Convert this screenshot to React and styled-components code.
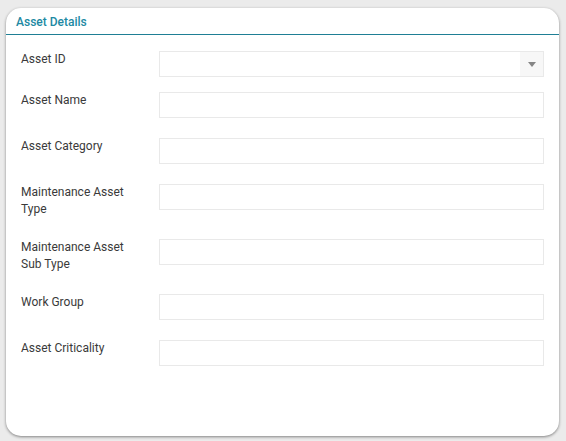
import React from 'react';
import styled, { createGlobalStyle } from 'styled-components';

const GlobalStyle = createGlobalStyle`
  html, body {
    margin: 0;
    padding: 0;
    background: #ebebeb;
    font-family: Roboto, "Liberation Sans", Arial, sans-serif;
  }
`;

const Page = styled.div`
  padding: 8px 7px 5px 6px;
`;

const Card = styled.section`
  height: 428px;
  box-sizing: border-box;
  background: #fff;
  border-radius: 15px;
  box-shadow: 0 1px 3px rgba(0, 0, 0, 0.45);
  overflow: hidden;
`;

const CardHeader = styled.header`
  height: 27px;
  box-sizing: border-box;
  padding: 7px 10px 0;
  border-bottom: 1px solid #1f7f95;
`;

const Title = styled.h2`
  margin: 0;
  font-size: 12px;
  font-weight: 500;
  line-height: 14px;
  color: #2189a3;
`;

const Form = styled.div`
  padding: 16px 15px 0;
  display: flex;
  flex-direction: column;
`;

const Row = styled.div`
  display: flex;
  align-items: flex-start;
  gap: 20px;
  margin-bottom: ${(props) => (props.$tight ? '15px' : '20px')};
`;

const Label = styled.label`
  width: 118px;
  flex-shrink: 0;
  font-size: 12px;
  line-height: 17.4px;
  color: #3a3a3a;
`;

const Input = styled.input`
  flex: 1;
  height: 26px;
  box-sizing: border-box;
  margin: 0;
  padding: 0 8px;
  border: 1px solid #e9e9e9;
  border-radius: 0;
  background: #fff;
  font: inherit;
  font-size: 12px;
  outline: none;
`;

const SelectBox = styled.div`
  flex: 1;
  height: 26px;
  box-sizing: border-box;
  display: flex;
  border: 1px solid #e9e9e9;
  background: #fff;
`;

const SelectValue = styled.div`
  flex: 1;
`;

const SelectButton = styled.div`
  width: 23px;
  display: flex;
  align-items: center;
  justify-content: center;
  background: #f7f7f7;
`;

const Caret = styled.span`
  width: 0;
  height: 0;
  border-left: 4.5px solid transparent;
  border-right: 4.5px solid transparent;
  border-top: 5px solid #858585;
  margin-top: 1px;
`;

const fields = [
  'Asset Name',
  'Asset Category',
  'Maintenance Asset Type',
  'Maintenance Asset Sub Type',
  'Work Group',
  'Asset Criticality',
];

const App = () => (
  <>
    <GlobalStyle />
    <Page>
      <Card>
        <CardHeader>
          <Title>Asset Details</Title>
        </CardHeader>
        <Form>
          <Row $tight>
            <Label>Asset ID</Label>
            <SelectBox>
              <SelectValue />
              <SelectButton>
                <Caret />
              </SelectButton>
            </SelectBox>
          </Row>
          {fields.map((name) => (
            <Row key={name}>
              <Label>{name}</Label>
              <Input type="text" />
            </Row>
          ))}
        </Form>
      </Card>
    </Page>
  </>
);

export default App;
